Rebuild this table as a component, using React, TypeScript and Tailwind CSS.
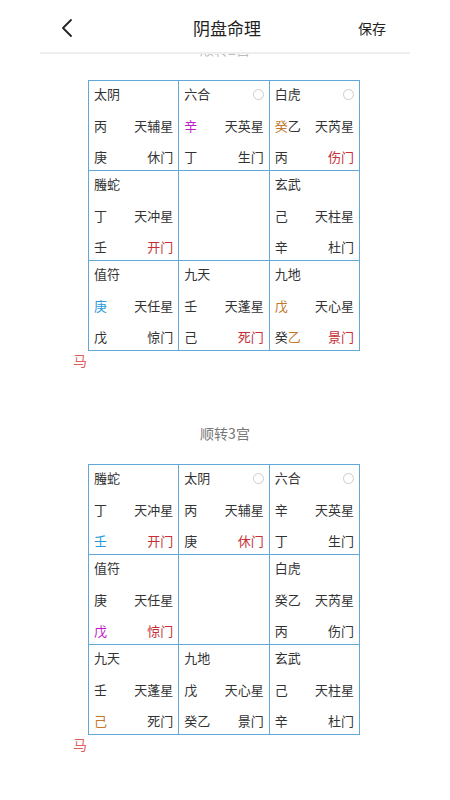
import React from 'react';

type Seg = [string, string?];
type Cell = {
  god?: string;
  dot?: boolean;
  a?: Seg[];
  star?: string;
  b?: Seg[];
  door?: string;
  doorRed?: boolean;
};

const MAG = 'text-[#c21ac9]';
const ORG = 'text-[#c2782e]';
const CYN = 'text-[#2a9ad8]';

const board1: Cell[] = [
  { god: '太阴', a: [['丙']], star: '天辅星', b: [['庚']], door: '休门' },
  { god: '六合', dot: true, a: [['辛', MAG]], star: '天英星', b: [['丁']], door: '生门' },
  { god: '白虎', dot: true, a: [['癸', ORG], ['乙']], star: '天芮星', b: [['丙']], door: '伤门', doorRed: true },
  { god: '螣蛇', a: [['丁']], star: '天冲星', b: [['壬']], door: '开门', doorRed: true },
  {},
  { god: '玄武', a: [['己']], star: '天柱星', b: [['辛']], door: '杜门' },
  { god: '值符', a: [['庚', CYN]], star: '天任星', b: [['戊']], door: '惊门' },
  { god: '九天', a: [['壬']], star: '天蓬星', b: [['己']], door: '死门', doorRed: true },
  { god: '九地', a: [['戊', ORG]], star: '天心星', b: [['癸'], ['乙', ORG]], door: '景门', doorRed: true },
];

const board2: Cell[] = [
  { god: '螣蛇', a: [['丁']], star: '天冲星', b: [['壬', CYN]], door: '开门', doorRed: true },
  { god: '太阴', dot: true, a: [['丙']], star: '天辅星', b: [['庚']], door: '休门', doorRed: true },
  { god: '六合', dot: true, a: [['辛']], star: '天英星', b: [['丁']], door: '生门' },
  { god: '值符', a: [['庚']], star: '天任星', b: [['戊', MAG]], door: '惊门', doorRed: true },
  {},
  { god: '白虎', a: [['癸'], ['乙']], star: '天芮星', b: [['丙']], door: '伤门' },
  { god: '九天', a: [['壬']], star: '天蓬星', b: [['己', ORG]], door: '死门' },
  { god: '九地', a: [['戊']], star: '天心星', b: [['癸'], ['乙']], door: '景门' },
  { god: '玄武', a: [['己']], star: '天柱星', b: [['辛']], door: '杜门' },
];

function Segs({ segs }: { segs?: Seg[] }) {
  return (
    <span>
      {segs?.map(([t, c], i) => (
        <span key={i} className={c ?? ''}>{t}</span>
      ))}
    </span>
  );
}

function Palace({ cell }: { cell: Cell }) {
  if (!cell.god) return <div className="bg-white" />;
  return (
    <div className="bg-white flex flex-col justify-between px-[5px] py-[4px] text-[13px] leading-[18px] text-[#333]">
      <div className="flex items-center justify-between">
        <span>{cell.god}</span>
        {cell.dot && <span className="shrink-0 w-[11px] h-[11px] rounded-full border border-[#cccccc]" />}
      </div>
      <div className="flex justify-between">
        <Segs segs={cell.a} />
        <span>{cell.star}</span>
      </div>
      <div className="flex justify-between">
        <Segs segs={cell.b} />
        <span className={cell.doorRed ? 'text-[#c62f36]' : ''}>{cell.door}</span>
      </div>
    </div>
  );
}

function Board({ cells }: { cells: Cell[] }) {
  return (
    <div className="w-[272px] mx-auto -translate-x-px">
      <div className="grid grid-cols-3 grid-rows-[repeat(3,89px)] gap-px p-px bg-[#62a7d8]">
        {cells.map((c, i) => (
          <Palace key={i} cell={c} />
        ))}
      </div>
      <div className="-ml-[15px] mt-[1px] text-[14px] leading-[16px] text-[#e0605e]">马</div>
    </div>
  );
}

export default function App() {
  return (
    <div className="w-[450px] h-[800px] bg-white overflow-hidden" style={{ fontFamily: '"Noto Sans CJK SC", "Noto Sans", sans-serif' }}>
      {/* Header */}
      <div className="h-[52px] flex items-center justify-between pl-[60px] pr-[64px]">
        <svg width="14" height="20" viewBox="0 0 14 20" fill="none" stroke="#222" strokeWidth="1.8" strokeLinecap="round" strokeLinejoin="round" className="mt-[4px]">
          <path d="M11 2 L3 10 L11 18" />
        </svg>
        <div className="text-[17px] text-[#222] ml-[22px] mt-[4px]">阴盘命理</div>
        <div className="text-[14px] text-[#222] mt-[4px]">保存</div>
      </div>
      <div className="mx-[40px] h-[2px] bg-[#eeeeee]" />
      {/* scrolled section title peeking under header */}
      <div className="h-[3px] overflow-hidden text-center">
        <div className="-mt-[13px] text-[14px] leading-[16px] text-[#bbbbbb]">顺转2宫</div>
      </div>

      <div className="mt-[23px]">
        <Board cells={board1} />
      </div>

      <div className="mt-[55px] text-center text-[14px] leading-[20px] text-[#777]">顺转3宫</div>

      <div className="mt-[21px]">
        <Board cells={board2} />
      </div>
    </div>
  );
}
